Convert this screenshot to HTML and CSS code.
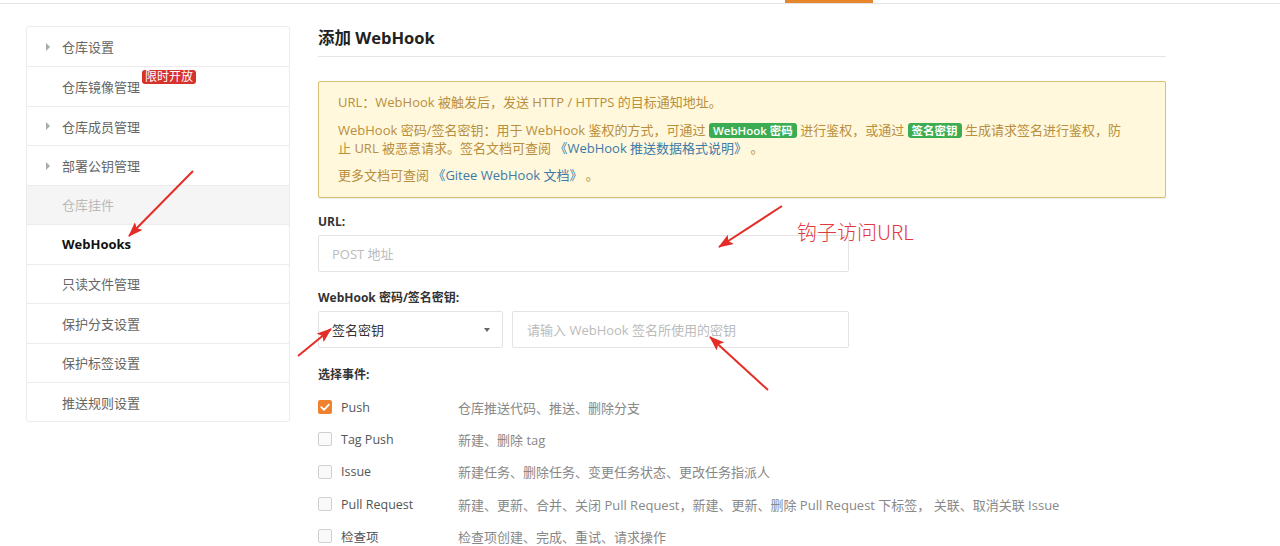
FILE: index.html
```html
<!DOCTYPE html>
<html lang="zh">
<head>
<meta charset="utf-8">
<title>WebHook</title>
<link rel="stylesheet" href="styles.css">
</head>
<body>
<div class="topbar"><span class="topbar-active"></span></div>
<div class="layout">
  <aside class="sidebar">
    <div class="side-item has-arrow"><span class="tri"></span>仓库设置</div>
    <div class="side-item">仓库镜像管理<span class="badge-red">限时开放</span></div>
    <div class="side-item has-arrow"><span class="tri"></span>仓库成员管理</div>
    <div class="side-item has-arrow"><span class="tri"></span>部署公钥管理</div>
    <div class="side-item disabled">仓库挂件</div>
    <div class="side-item active">WebHooks</div>
    <div class="side-item">只读文件管理</div>
    <div class="side-item">保护分支设置</div>
    <div class="side-item">保护标签设置</div>
    <div class="side-item">推送规则设置</div>
  </aside>
  <main class="main">
    <h2 class="title">添加 WebHook</h2>
    <div class="alert">
      <p class="p1">URL：WebHook 被触发后，发送 HTTP / HTTPS 的目标通知地址。</p>
      <p class="p2">WebHook 密码/签名密钥：用于 WebHook 鉴权的方式，可通过 <span class="tag-green">WebHook 密码</span> 进行鉴权，或通过 <span class="tag-green">签名密钥</span> 生成请求签名进行鉴权，防<br>止 URL 被恶意请求。签名文档可查阅 <span class="link">《WebHook 推送数据格式说明》</span> 。</p>
      <p class="p3">更多文档可查阅 <span class="link">《Gitee WebHook 文档》</span> 。</p>
    </div>
    <div class="field-label first">URL:</div>
    <div class="input-row">
      <div class="input url"><span class="ph">POST 地址</span></div>
    </div>
    <div class="field-label">WebHook 密码/签名密钥:</div>
    <div class="input-row">
      <div class="select"><span>签名密钥</span><span class="caret"></span></div>
      <div class="input secret"><span class="ph">请输入 WebHook 签名所使用的密钥</span></div>
    </div>
    <div class="field-label events">选择事件:</div>
    <div class="events-list">
      <div class="ev"><span class="cb checked"><svg viewBox="0 0 14 14" width="14" height="14"><path d="M3.3 7.2 L6 9.8 L10.8 4.6" fill="none" stroke="#fff" stroke-width="1.8" stroke-linecap="round" stroke-linejoin="round"/></svg></span><span class="ev-name">Push</span><span class="ev-desc">仓库推送代码、推送、删除分支</span></div>
      <div class="ev"><span class="cb"></span><span class="ev-name">Tag Push</span><span class="ev-desc">新建、删除 tag</span></div>
      <div class="ev"><span class="cb"></span><span class="ev-name">Issue</span><span class="ev-desc">新建任务、删除任务、变更任务状态、更改任务指派人</span></div>
      <div class="ev"><span class="cb"></span><span class="ev-name">Pull Request</span><span class="ev-desc">新建、更新、合并、关闭 Pull Request，新建、更新、删除 Pull Request 下标签， 关联、取消关联 Issue</span></div>
      <div class="ev"><span class="cb"></span><span class="ev-name">检查项</span><span class="ev-desc">检查项创建、完成、重试、请求操作</span></div>
    </div>
  </main>
</div>
<div class="note">钩子访问URL</div>
<svg class="arrows" width="1280" height="546" viewBox="0 0 1280 546">
  <defs>
    <marker id="ah" markerUnits="userSpaceOnUse" markerWidth="15" markerHeight="11" refX="14" refY="5.5" orient="auto">
      <path d="M0,0 L15,5.5 L0,11 L3,5.5 z" fill="#e52d27"/>
    </marker>
  </defs>
  <line x1="193" y1="171" x2="129" y2="236" stroke="#e52d27" stroke-width="2" marker-end="url(#ah)"/>
  <line x1="782" y1="206" x2="719" y2="247" stroke="#e52d27" stroke-width="2" marker-end="url(#ah)"/>
  <line x1="298" y1="356" x2="331" y2="329" stroke="#e52d27" stroke-width="2" marker-end="url(#ah)"/>
  <line x1="768" y1="390" x2="710" y2="337" stroke="#e52d27" stroke-width="2" marker-end="url(#ah)"/>
</svg>
</body>
</html>
```
FILE: styles.css
```css
html, body {
  margin: 0;
  padding: 0;
  background: #fff;
  font-family: "Open Sans", "Noto Sans CJK SC", sans-serif;
  color: #333;
}
.topbar {
  height: 3px;
  border-bottom: 1px solid #e4e4e4;
  display: flex;
}
.topbar-active {
  margin-left: 785px;
  width: 88px;
  height: 3px;
  background: #e8862d;
}
.layout {
  display: flex;
  align-items: flex-start;
  margin-top: 22px;
}
.sidebar {
  margin-left: 26px;
  width: 262px;
  border: 1px solid #ececec;
  border-radius: 3px;
}
.side-item {
  position: relative;
  display: flex;
  align-items: center;
  padding-left: 35px;
  font-size: 13px;
  color: #666;
  border-top: 1px solid #ececec;
  box-sizing: border-box;
  height: 39.45px;
}
.side-item:first-child { border-top: none; }
.side-item.disabled { background: #f5f5f5; color: #bbb; }
.side-item.active { color: #111; font-weight: 700; }
.tri {
  position: absolute;
  left: 19px;
  top: 50%;
  margin-top: -4px;
  width: 0;
  height: 0;
  border-top: 4px solid transparent;
  border-bottom: 4px solid transparent;
  border-left: 4px solid #aaa;
}
.badge-red {
  position: absolute;
  left: 115px;
  top: 3px;
  background: #d7312b;
  color: #fff;
  font-size: 12px;
  line-height: 14px;
  padding: 0 3px;
  border-radius: 3px;
}
.main {
  margin-left: 28px;
  width: 848px;
}
.title {
  margin: 0;
  margin-top: 1px;
  font-size: 16.5px;
  font-weight: 700;
  line-height: 22px;
  color: #222;
  padding-bottom: 7px;
  border-bottom: 1px solid #e5e5e5;
}
.alert {
  margin-top: 24px;
  border: 1px solid #d9bf73;
  background: #fff8dc;
  border-radius: 2px;
  padding: 11px 20px 13px 19px;
  font-size: 13px;
  line-height: 18px;
  color: #b98e3c;
  box-shadow: 0 1px 1px rgba(0,0,0,0.08);
}
.alert p { margin: 0; white-space: nowrap; }
.alert .p2 { margin-top: 10px; }
.alert .p3 { margin-top: 9px; }
.link { color: #3d7aa8; }
.tag-green {
  display: inline-block;
  background: #3bac52;
  color: #fff;
  font-weight: 600;
  font-size: 11.5px;
  line-height: 15px;
  padding: 0 4px;
  border-radius: 3px;
}
.field-label {
  margin-top: 17px;
  font-size: 12px;
  font-weight: 700;
  line-height: 18px;
  color: #333;
}
.field-label.first { margin-top: 15px; }
.field-label.events { margin-top: 18px; }
.input-row {
  margin-top: 4px;
  display: flex;
  gap: 9px;
}
.input, .select {
  height: 37px;
  box-sizing: border-box;
  border: 1px solid #e3e3e3;
  border-radius: 2px;
  display: flex;
  align-items: center;
  font-size: 13px;
}
.input.url { width: 531px; padding-left: 13px; }
.input.secret { width: 337px; padding-left: 14px; }
.ph { color: #bbb; }
.select {
  width: 185px;
  padding-left: 13px;
  padding-right: 12px;
  justify-content: space-between;
  color: #333;
  font-size: 13px;
}
.caret {
  width: 0;
  height: 0;
  border-left: 3px solid transparent;
  border-right: 3px solid transparent;
  border-top: 4px solid #666;
}
.events-list { margin-top: 7px; }
.ev {
  height: 32.3px;
  display: flex;
  align-items: center;
  font-size: 12.5px;
}
.cb {
  width: 14px;
  height: 14px;
  box-sizing: border-box;
  border: 1px solid #cfcfcf;
  border-radius: 2px;
  background: #fafafa;
  display: inline-flex;
  flex-shrink: 0;
}
.cb.checked {
  border: none;
  background: #f0822f;
}
.ev-name {
  width: 117px;
  margin-left: 9px;
  color: #555;
}
.ev-desc {
  color: #888;
  font-size: 13px;
  white-space: nowrap;
}
.note {
  position: absolute;
  left: 797px;
  top: 218px;
  font-size: 20px;
  line-height: 27px;
  color: #e2393e;
  font-family: "Noto Sans CJK SC", sans-serif;
  font-weight: 300;
}
.arrows {
  position: absolute;
  left: 0;
  top: 0;
  pointer-events: none;
}
```
